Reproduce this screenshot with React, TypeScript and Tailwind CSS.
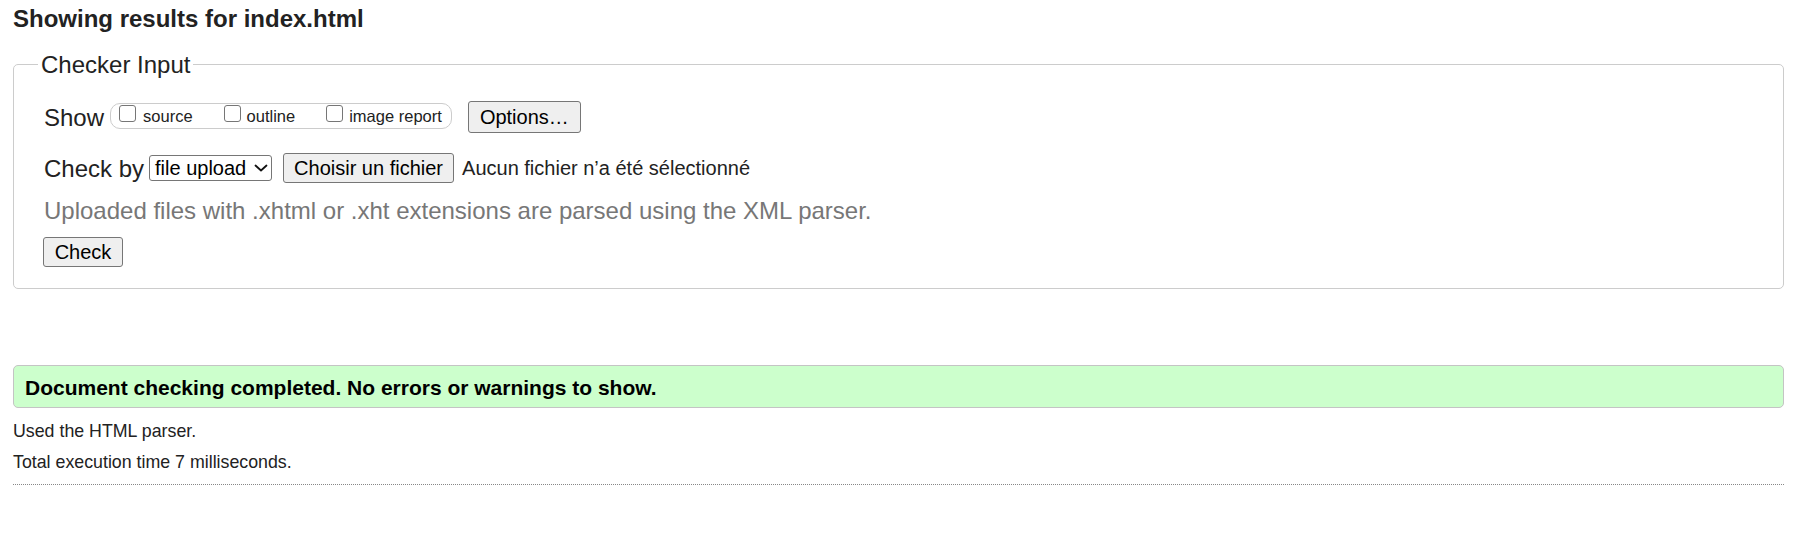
import React from "react";

function Checkbox() {
  return (
    <span className="mt-[1px] block w-[17px] h-[17px] shrink-0 border border-[#767676] rounded-[3px] bg-white" />
  );
}

export default function App() {
  return (
    <div className="w-[1812px] h-[543px] bg-white text-[#222] font-['Liberation_Sans',Arial,sans-serif] pl-[13px] pt-[5px]">
      <h2 className="text-[24px] leading-[28px] font-bold">Showing results for index.html</h2>

      <fieldset className="mt-[18px] w-[1771px] border border-[#cccccc] rounded-[5px] px-[30px] pt-[23px] pb-[21px]">
        <legend className="ml-[-6px] px-[3px] text-[24px] leading-[27px]">Checker Input</legend>

        <div className="flex items-center h-[32px]">
          <span className="text-[24px] leading-[27px]">Show</span>
          <div className="self-start mt-[2px] ml-[6px] flex items-start h-[26px] border border-[#cccccc] rounded-[10px] pl-[8px] pr-[9px]">
            <Checkbox />
            <span className="ml-[7px] mt-[3px] text-[16.5px] leading-[19px]">source</span>
            <span className="ml-[31px]" />
            <Checkbox />
            <span className="ml-[6px] mt-[3px] text-[16.5px] leading-[19px]">outline</span>
            <span className="ml-[31px]" />
            <Checkbox />
            <span className="ml-[6px] mt-[3px] text-[16.5px] leading-[19px]">image report</span>
          </div>
          <button className="ml-[16px] w-[113px] h-[32px] flex items-center justify-center border border-[#767676] rounded-[3px] bg-[#efefef] text-[20px] leading-[23px] text-black">
            Options…
          </button>
        </div>

        <div className="mt-[20px] flex items-center h-[30px]">
          <span className="text-[24px] leading-[27px]">Check by</span>
          <div className="ml-[5px] w-[123px] h-[26px] flex items-center border border-[#767676] rounded-[3px] pl-[5px] bg-white text-black">
            <span className="text-[20px] leading-[23px]">file upload</span>
            <svg className="ml-[8px]" width="14" height="8" viewBox="0 0 14 8" fill="none">
              <path d="M1.5 1.5L7 6.5L12.5 1.5" stroke="#111" strokeWidth="1.8" strokeLinecap="round" strokeLinejoin="round" />
            </svg>
          </div>
          <button className="ml-[11px] w-[171px] h-[30px] flex items-center justify-center border border-[#767676] rounded-[3px] bg-[#efefef] text-[20px] leading-[23px] text-black">
            Choisir un fichier
          </button>
          <span className="ml-[8px] text-[20px] leading-[23px]">Aucun fichier n’a été sélectionné</span>
        </div>

        <p className="mt-[14px] text-[24px] leading-[27px] text-[#777777]">
          Uploaded files with .xhtml or .xht extensions are parsed using the XML parser.
        </p>

        <div className="mt-[13px] flex">
          <button className="ml-[-1px] w-[80px] h-[30px] flex items-center justify-center border border-[#767676] rounded-[3px] bg-[#efefef] text-[20px] leading-[23px] text-black">
            Check
          </button>
        </div>
      </fieldset>

      <div className="mt-[76px] w-[1771px] h-[43px] border border-[#c4c4c4] rounded-[5px] bg-[#ccffcc] pl-[11px] pt-[10px]">
        <p className="text-[21px] leading-[24px] font-bold text-black">
          Document checking completed. No errors or warnings to show.
        </p>
      </div>

      <p className="mt-[13px] text-[17.8px] leading-[20px]">Used the HTML parser.</p>
      <p className="mt-[11px] text-[17.8px] leading-[20px]">Total execution time 7 milliseconds.</p>
      <div className="mt-[12px] w-[1771px] border-t border-dotted border-[#888888]" />
    </div>
  );
}
